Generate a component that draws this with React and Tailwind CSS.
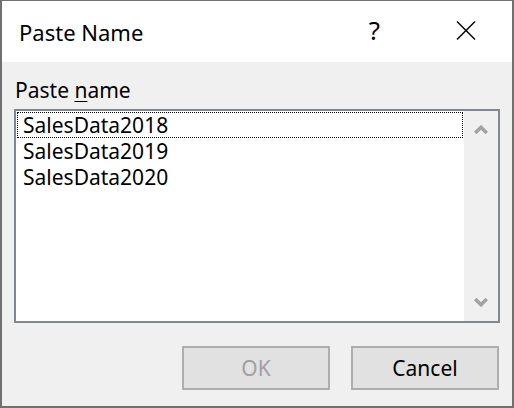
import React from "react";

function Chevron({ up }) {
  return (
    <svg width="14" height="10" viewBox="0 0 14 10" className="block">
      <polyline
        points={up ? "1.2,9 7,3.2 12.8,9" : "1.2,1 7,6.8 12.8,1"}
        fill="none"
        stroke="#a3a3a3"
        strokeWidth="3.6"
        strokeLinejoin="miter"
      />
    </svg>
  );
}

export default function App() {
  const items = ["SalesData2018", "SalesData2019", "SalesData2020"];
  return (
    <div className="w-[514px] h-[408px] flex flex-col border-x-2 border-b-2 border-t border-[#707070] bg-[#f0f0f0] font-['Noto_Sans',sans-serif] text-black overflow-hidden">
      <div className="h-[61px] bg-white flex items-center pl-[17px] shrink-0">
        <span className="text-[22px] leading-none">Paste Name</span>
        <span className="ml-auto text-[26px] leading-none pb-[4px]">?</span>
        <svg width="20" height="19" viewBox="0 0 20 19" className="ml-[76px] mr-[36px] mb-[2px]">
          <line x1="1" y1="0.5" x2="19" y2="18.5" stroke="#000" strokeWidth="1.4" />
          <line x1="19" y1="0.5" x2="1" y2="18.5" stroke="#000" strokeWidth="1.4" />
        </svg>
      </div>
      <div className="flex-1 flex flex-col">
        <div className="pt-[16px] pl-[13px] h-[41px] text-[21px] leading-[25px] box-border">
          Paste <span className="underline underline-offset-[3px] decoration-1">n</span>ame
        </div>
        <div className="mt-[6px] mx-[12px] h-[214px] border-2 border-[#82878f] flex">
          <div className="flex-1 bg-white pt-[1px] pl-[1px] pr-[1px]">
            {items.map((it, i) => (
              <div
                key={it}
                className={
                  "h-[26px] leading-[24px] text-[21px] pl-[5px] " +
                  (i === 0 ? "border border-dotted border-black" : "border border-transparent")
                }
              >
                <span>{it}</span>
              </div>
            ))}
          </div>
          <div className="w-[34px] bg-[#f0f0f0] flex flex-col items-center justify-between pt-[13px] pb-[13px]">
            <Chevron up />
            <Chevron />
          </div>
        </div>
        <div className="mt-[23px] flex justify-end gap-[21px] pr-[13px]">
          <button className="w-[148px] h-[44px] border-2 border-[#adadad] bg-[#e1e1e1] text-[21px] text-[#a0a0a0] leading-none">
            OK
          </button>
          <button className="w-[148px] h-[44px] border-2 border-[#adadad] bg-[#e1e1e1] text-[21px] text-black leading-none">
            Cancel
          </button>
        </div>
      </div>
    </div>
  );
}
